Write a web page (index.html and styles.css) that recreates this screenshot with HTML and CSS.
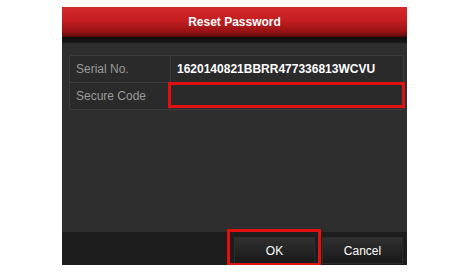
FILE: index.html
```html
<!DOCTYPE html>
<html lang="en">

<head>
    <meta charset="UTF-8">
    <meta name="viewport" content="width=device-width, initial-scale=1.0">
    <title>Reset Password</title>
    <link rel="stylesheet" href="styles.css">
</head>

<body>
    <div class="dialog">
        <div class="title">Reset Password</div>
        <div class="title-shadow"></div>
        <div class="content">
            <div class="info-table">
                <div class="row">
                    <span class="label">Serial No.</span>
                    <span class="value">1620140821BBRR477336813WCVU</span>
                </div>
                <div class="row">
                    <span class="label">Secure Code</span>
                    <span class="value input-cell"></span>
                </div>
                <div class="mark mark-code"></div>
            </div>
        </div>
        <div class="footer">
            <button class="btn">OK</button>
            <button class="btn">Cancel</button>
            <div class="mark mark-ok"></div>
        </div>
    </div>
</body>

</html>
```

FILE: styles.css
```css
body {
    margin: 0;
    background-color: #ffffff;
    font-family: "Liberation Sans", Arial, sans-serif;
}

.dialog {
    width: 345px;
    margin: 7px 0 0 62px;
    background-color: #2e2e2e;
}

.title {
    height: 30px;
    line-height: 30px;
    text-align: center;
    color: #ffffff;
    font-size: 12px;
    font-weight: bold;
    background: linear-gradient(#d42a2c 0%, #c41e21 45%, #9a1214 80%, #5a0a0a 100%);
}

.title-shadow {
    height: 6px;
    background: linear-gradient(#0c0c0c, #1a1a1a);
}

.content {
    height: 189px;
    padding: 12px 3px 0 7px;
    box-sizing: border-box;
}

.info-table {
    position: relative;
    border: 1px solid #3c3c3c;
    border-radius: 2px;
    background-color: #2a2a2a;
}

.row {
    display: flex;
    height: 26px;
    align-items: center;
}

.row + .row {
    border-top: 1px solid #3c3c3c;
}

.label {
    width: 94px;
    padding-left: 6px;
    height: 100%;
    line-height: 26px;
    border-right: 1px solid #3c3c3c;
    color: #9a9a9a;
    font-size: 12px;
}

.value {
    flex: 1;
    padding-left: 6px;
    color: #ffffff;
    font-size: 12px;
    font-weight: bold;
}

.footer {
    position: relative;
    height: 33px;
    background-color: #1d1d1d;
    display: flex;
    justify-content: flex-end;
    align-items: flex-start;
    gap: 7px;
    padding: 5px 4px 0 0;
    box-sizing: border-box;
}

.btn {
    width: 81px;
    height: 27px;
    border: 1px solid #2c2c2c;
    background: linear-gradient(#303030, #181818);
    color: #ffffff;
    font-family: "Liberation Sans", Arial, sans-serif;
    font-size: 12px;
    padding: 0;
}

.mark {
    position: absolute;
    border: 3px solid #e01010;
    box-sizing: border-box;
}

.mark-code {
    left: 98px;
    top: 26px;
    width: 237px;
    height: 26px;
}

.mark-ok {
    left: 165px;
    top: -3px;
    width: 94px;
    height: 37px;
}
```
